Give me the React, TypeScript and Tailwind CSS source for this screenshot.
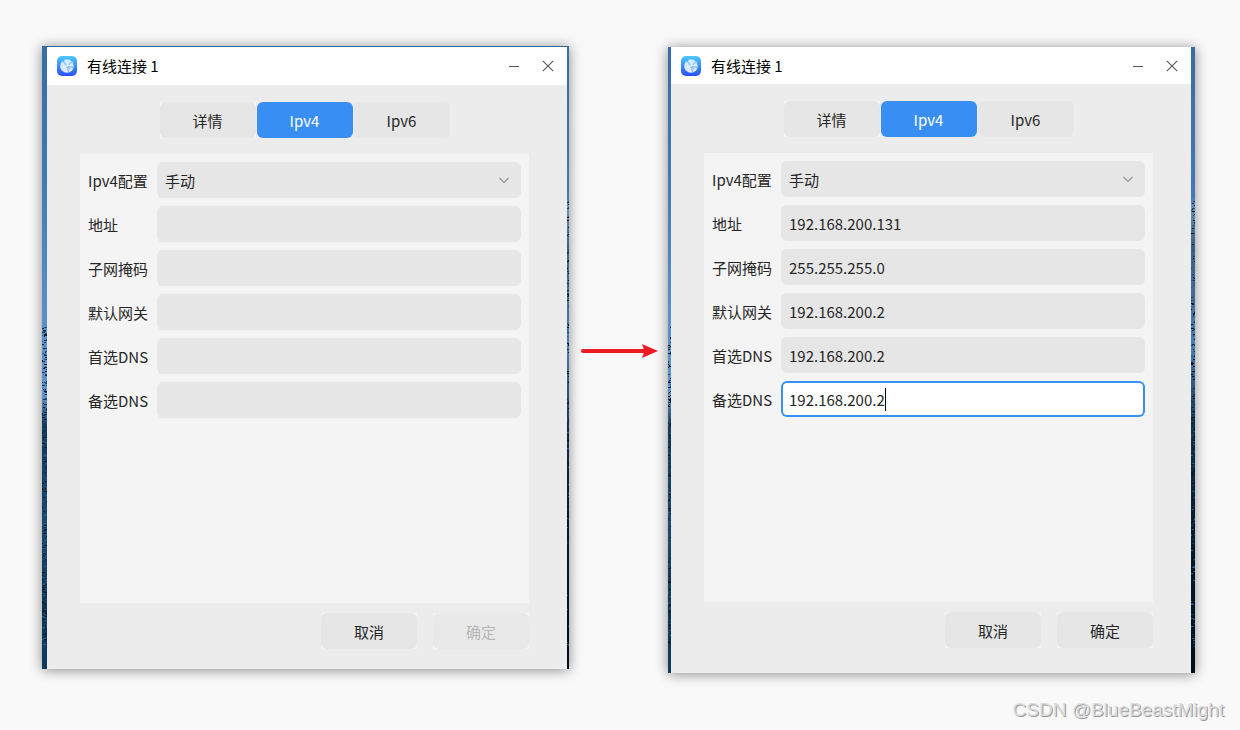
import { useId, useState } from 'react';

type FieldKey = 'address' | 'mask' | 'gateway' | 'dns1' | 'dns2';
type Values = Record<FieldKey, string>;

const FIELDS: { key: FieldKey; label: string }[] = [
  { key: 'address', label: '地址' },
  { key: 'mask', label: '子网掩码' },
  { key: 'gateway', label: '默认网关' },
  { key: 'dns1', label: '首选DNS' },
  { key: 'dns2', label: '备选DNS' },
];

const TABS = ['详情', 'Ipv4', 'Ipv6'];

const EMPTY: Values = { address: '', mask: '', gateway: '', dns1: '', dns2: '' };

const FILLED: Values = {
  address: '192.168.200.131',
  mask: '255.255.255.0',
  gateway: '192.168.200.2',
  dns1: '192.168.200.2',
  dns2: '192.168.200.2',
};

// Rough bits of rock and sea in the desktop wallpaper, from `start` downwards
function makeSpecks(start: number, width: number) {
  let seed = start + width;
  const rand = () => {
    seed = (seed * 16807) % 2147483647;
    return seed / 2147483647;
  };
  const colors = ['#0a1c33', '#12365a', '#245a8a', '#0a1a2c', '#1d4c78'];
  return Array.from({ length: 60 * width }, () => ({
    x: Math.floor(rand() * width),
    y: Math.floor(start + rand() * (600 - start)),
    w: 1 + Math.floor(rand() * 3),
    fill: colors[Math.floor(rand() * colors.length)],
  }));
}

function WallpaperStrip({ start, width, tone, className }: {
  start: number;
  width: number;
  tone: 'sea' | 'rock';
  className: string;
}) {
  return (
    <div
      className={`shrink-0 overflow-hidden ${className} ${
        tone === 'sea'
          ? 'bg-[linear-gradient(#3a6ca5_0px,#4078b3_120px,#5b8fca_270px,#5f92c6_350px,#12395b_380px,#1a4a75_480px,#0e3452_560px,#0d3c61_620px)]'
          : 'bg-[linear-gradient(#3a6ca5_0px,#4279b8_150px,#6d8fb3_160px,#3c5f86_200px,#4b7eb2_300px,#12304b_380px,#071a2c_480px,#01101b_620px)]'
      }`}
    >
      <svg width={width} height="626" shapeRendering="crispEdges" aria-hidden="true">
        {makeSpecks(start, width).map((s, i) => (
          <rect key={i} x={s.x} y={s.y} width={s.w} height="1" fill={s.fill} />
        ))}
      </svg>
    </div>
  );
}

function NetworkIcon() {
  const id = useId();
  return (
    <svg width="20" height="20" viewBox="0 0 20 20" aria-hidden="true">
      <defs>
        <linearGradient id={`${id}-bg`} x1="0" y1="0" x2="0" y2="1">
          <stop offset="0" stopColor="#50cafd" />
          <stop offset="0.5" stopColor="#3b8dfb" />
          <stop offset="1" stopColor="#2a50f6" />
        </linearGradient>
        <linearGradient id={`${id}-globe`} x1="0" y1="0" x2="0" y2="1">
          <stop offset="0" stopColor="#c9ecfe" />
          <stop offset="1" stopColor="#e3e9fe" />
        </linearGradient>
      </defs>
      <rect width="20" height="20" rx="5" fill={`url(#${id}-bg)`} />
      <circle cx="10" cy="10" r="6.800" fill={`url(#${id}-globe)`} />
      <path d="M4 3.500L7.500 3L6.500 6L5 5.500Z" fill="#49b6fc" />
      <g fill="none" stroke="#4c9dfb" strokeWidth="0.800">
        <path d="M6.500 5C7.500 8 10 10.800 16.800 11.500" />
        <path d="M15 5.500L11 9.300C10 11 10.500 13.500 12 16.500" />
        <path d="M11 10.500L14.500 15" />
      </g>
      <circle cx="10.800" cy="9.600" r="1" fill="#fff" />
      <circle cx="14" cy="14" r="0.900" fill="#fff" />
    </svg>
  );
}

function TitleBar({ className }: { className: string }) {
  return (
    <header className={`flex items-center bg-white pl-[10px] pr-[13px] text-black ${className}`}>
      <NetworkIcon />
      <h1 className="ml-[10px] flex-1 text-[15px] leading-5">有线连接 1</h1>
      <button type="button" aria-label="最小化" className="mr-[22px]">
        <svg width="12" height="12" viewBox="0 0 12 12" stroke="#555" shapeRendering="crispEdges">
          <path d="M1 6.500H11" />
        </svg>
      </button>
      <button type="button" aria-label="关闭">
        <svg width="12" height="12" viewBox="0 0 12 12" stroke="#555" strokeWidth="1.100">
          <path d="M0.800 0.800L11.200 11.200M11.200 0.800L0.800 11.200" />
        </svg>
      </button>
    </header>
  );
}

function ConnectionWindow({ initial, focused, canConfirm, titleClass, footerClass }: {
  initial: Values;
  focused?: FieldKey;
  canConfirm: boolean;
  titleClass: string;
  footerClass: string;
}) {
  const id = useId();
  const [tab, setTab] = useState('Ipv4');
  const [values, setValues] = useState(initial);

  return (
    <section className="flex min-w-0 flex-1 flex-col bg-[#ececec] text-[15px] leading-5 text-[#262626]">
      <TitleBar className={titleClass} />
      <div className={`pl-[33px] pr-[38px] pt-[17px] ${footerClass}`}>
        <div role="tablist" className="flex justify-center gap-px">
          {TABS.map(t => (
            <div key={t} role="presentation" className="first:bg-[#f4f4f4]">
              <button
                type="button"
                role="tab"
                aria-selected={t === tab}
                onClick={() => setTab(t)}
                className={`block h-9 w-24 rounded-md pt-[2px] ${t === tab ? 'bg-[#398ef4] text-white' : 'bg-[#e6e6e6]'}`}
              >
                {t}
              </button>
            </div>
          ))}
        </div>

        <form className="mt-4 flex h-[449px] flex-col gap-2 bg-[#f4f4f4] p-2">
          <div className="flex items-center">
            <label htmlFor={`${id}-mode`} className="w-[69px] shrink-0 pt-[2px]">Ipv4配置</label>
            <div className="relative flex-1">
              <select id={`${id}-mode`} className="h-9 w-full appearance-none rounded-md bg-[#e6e6e6] px-2 pt-[2px]">
                <option>手动</option>
                <option>自动</option>
              </select>
              <svg className="pointer-events-none absolute right-3 top-3 h-3 w-[10px]" viewBox="0 0 10 12" fill="none" stroke="#929292" strokeWidth="1.200">
                <path d="M0.500 4L5 8.500L9.500 4" />
              </svg>
            </div>
          </div>

          {FIELDS.map(f => (
            <div key={f.key} className="flex items-center">
              <label htmlFor={`${id}-${f.key}`} className="w-[69px] shrink-0 pt-[2px]">{f.label}</label>
              <div className="relative flex-1">
                <input
                  id={`${id}-${f.key}`}
                  type="text"
                  value={values[f.key]}
                  onChange={e => setValues({ ...values, [f.key]: e.target.value })}
                  className={`block h-9 w-full rounded-md px-2 outline-none ${
                    focused === f.key ? 'bg-white ring-2 ring-inset ring-[#398ef4]' : 'bg-[#e6e6e6]'
                  }`}
                />
                {/* text cursor */}
                {focused === f.key && <span className="absolute left-[104px] top-[7px] h-[23px] w-px bg-black" />}
              </div>
            </div>
          ))}
        </form>

        <div className="mt-[10px] flex justify-end gap-4">
          <div className="bg-[#f4f4f4]">
            <button type="button" className="block h-9 w-24 rounded-md bg-[#e6e6e6] pt-[2px]">取消</button>
          </div>
          <div className="bg-[#f4f4f4]">
            <button
              type="button"
              disabled={!canConfirm}
              className="block h-9 w-24 rounded-md bg-[#e6e6e6] pt-[2px] disabled:bg-[#e9e9e9] disabled:text-[#b5b5b5]"
            >
              确定
            </button>
          </div>
        </div>
      </div>
    </section>
  );
}

export default function App() {
  return (
    <div className="min-h-screen bg-[#f9f9f9] pt-[46px] font-['Noto_Sans_CJK_SC',sans-serif]">
      <main className="flex items-start pl-[42px] pr-[45px]">
        <div className="flex flex-1 border-t border-[#34659c] shadow-[0_1px_12px_rgba(0,0,0,0.45)]">
          <WallpaperStrip start={280} width={5} tone="sea" className="h-[622px] w-[5px]" />
          <ConnectionWindow initial={EMPTY} canConfirm={false} titleClass="h-[38px]" footerClass="pb-5" />
          <WallpaperStrip start={154} width={2} tone="rock" className="h-[622px] w-[2px]" />
        </div>

        <svg className="mt-[295px] w-[99px] shrink-0" width="99" height="20" viewBox="0 0 99 20" role="img" aria-label="箭头">
          <path d="M14 10H78" stroke="#ed1c24" strokeWidth="4" strokeLinecap="round" />
          <path d="M73 3L89 10L73 17L75.500 10Z" fill="#ed1c24" />
        </svg>

        <div className="mt-px flex flex-1 shadow-[0_1px_12px_rgba(0,0,0,0.45)]">
          <WallpaperStrip start={280} width={3} tone="sea" className="h-[626px] w-[3px]" />
          <ConnectionWindow initial={FILLED} focused="dns2" canConfirm titleClass="h-[37px]" footerClass="pb-[25px]" />
          <WallpaperStrip start={154} width={4} tone="rock" className="h-[626px] w-1" />
        </div>
      </main>

      <footer className="mt-[25px] pr-4 text-right font-['Liberation_Sans',sans-serif] text-[19px] leading-6 text-[#dcdcdc] [text-shadow:1px_1px_0_#999]">
        CSDN @BlueBeastMight
      </footer>
    </div>
  );
}
